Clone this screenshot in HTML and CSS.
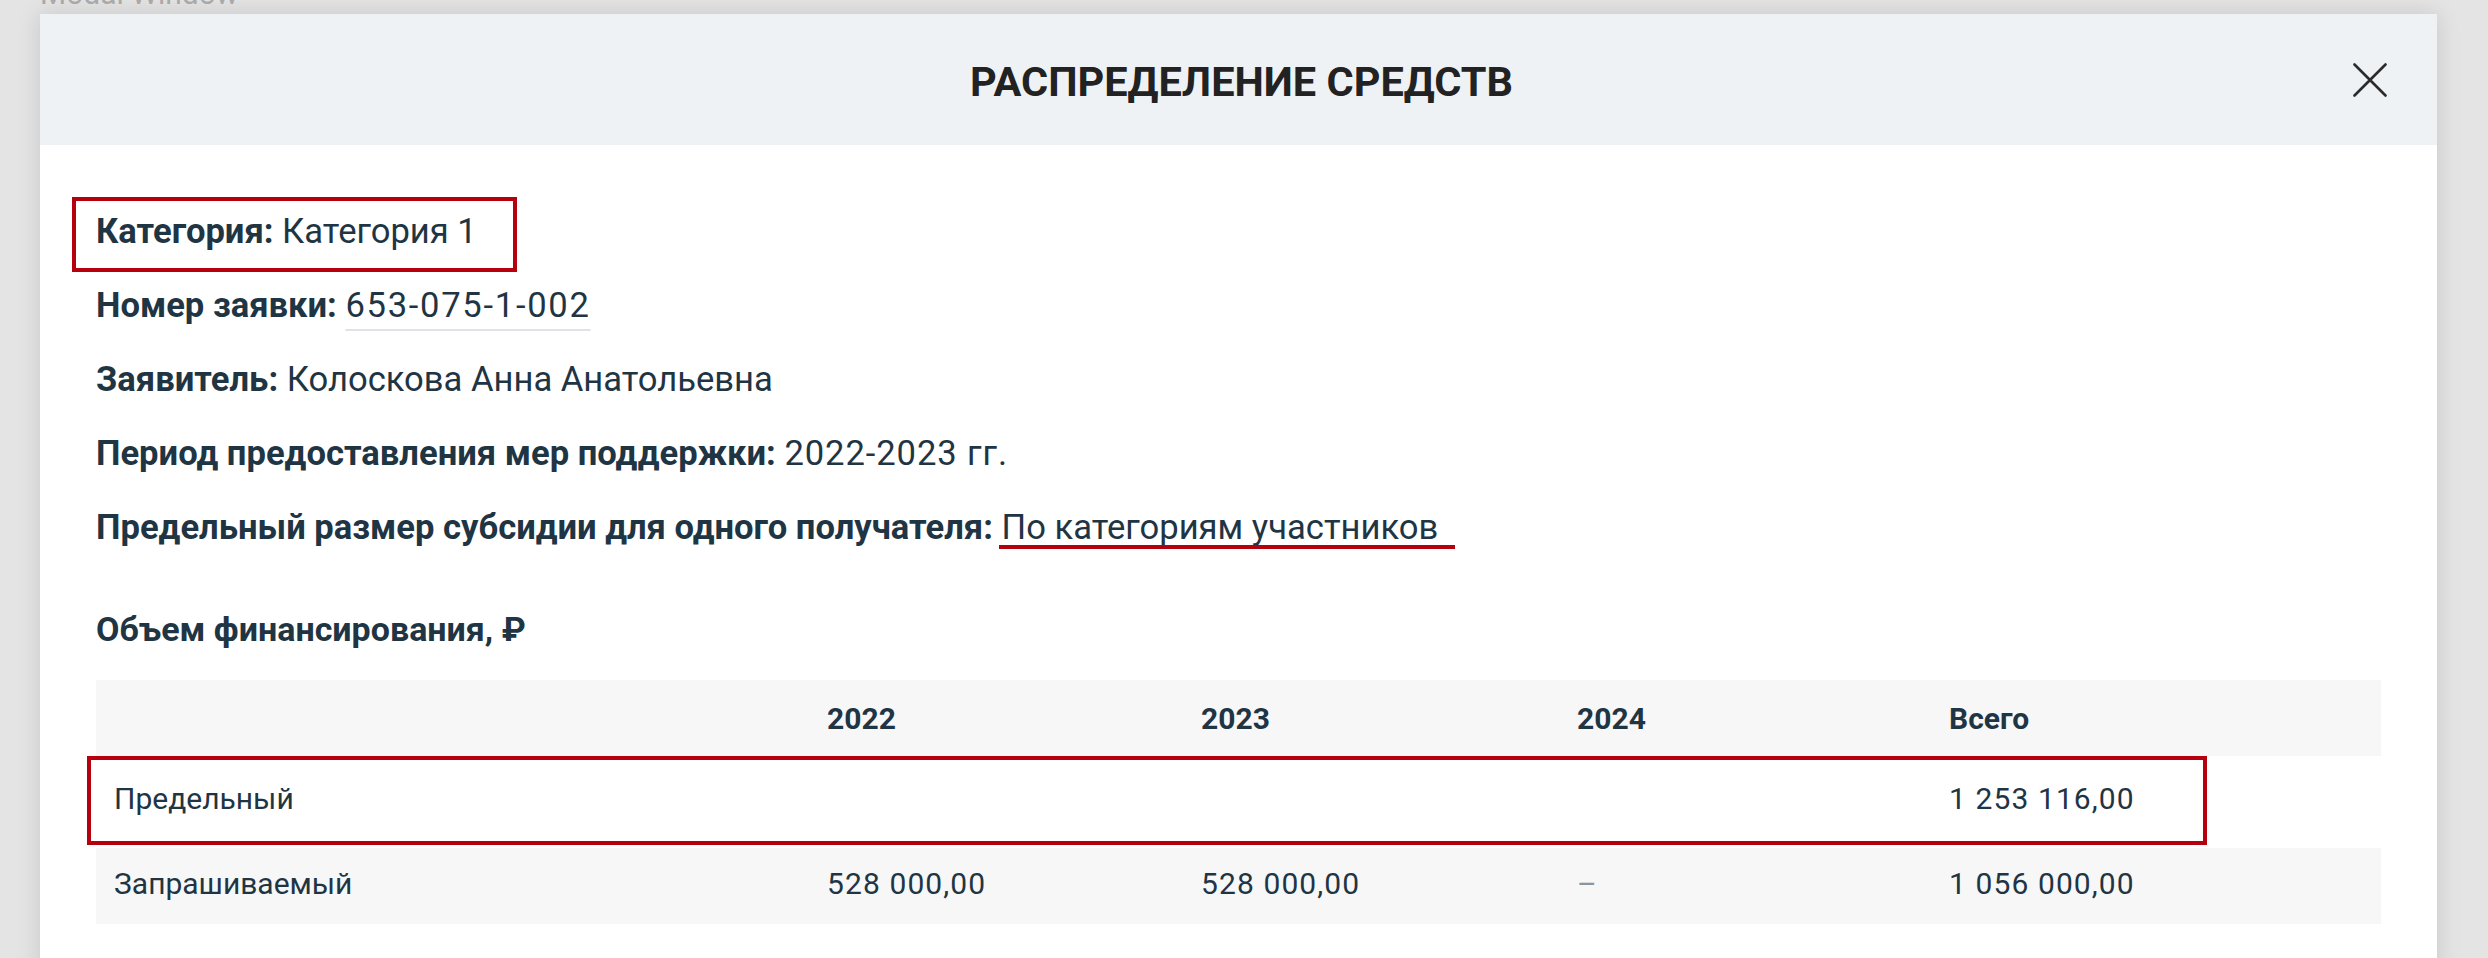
FILE: index.html
```html
<!DOCTYPE html>
<html lang="ru">
<head>
<meta charset="utf-8">
<title>Modal Window</title>
<link rel="stylesheet" href="styles.css">
</head>
<body>
<div class="page-label">Modal Window</div>
<div class="modal">
  <div class="modal-header">
    <span></span>
    <h1 class="modal-title">РАСПРЕДЕЛЕНИЕ СРЕДСТВ</h1>
    <button class="close" aria-label="Закрыть">
      <svg width="34" height="34" viewBox="0 0 34 34"><path d="M1.5 1.5 L32.5 32.5 M32.5 1.5 L1.5 32.5" stroke="#2b2b2b" stroke-width="2.6" fill="none" stroke-linecap="round"/></svg>
    </button>
  </div>
  <div class="modal-body">
    <div class="info">
      <p class="info-row"><span class="mark-box"><b>Категория:</b> Категория 1</span></p>
      <p class="info-row"><b>Номер заявки:</b> <span class="link">653-075-1-002</span></p>
      <p class="info-row"><b>Заявитель:</b> Колоскова Анна Анатольевна</p>
      <p class="info-row"><b>Период предоставления мер поддержки:</b> <span class="digits">2022-2023 гг.</span></p>
      <p class="info-row"><b>Предельный размер субсидии для одного получателя:</b> <span class="mark-line">По категориям участников</span></p>
    </div>
    <h2 class="section-title">Объем финансирования, ₽</h2>
    <div class="fin-table">
      <div class="tr th">
        <div class="td"></div>
        <div class="td">2022</div>
        <div class="td">2023</div>
        <div class="td">2024</div>
        <div class="td">Всего</div>
      </div>
      <div class="tr tr-limit">
        <div class="td">Предельный</div>
        <div class="td"></div>
        <div class="td"></div>
        <div class="td"></div>
        <div class="td num">1 253 116,00</div>
      </div>
      <div class="tr tr-alt">
        <div class="td">Запрашиваемый</div>
        <div class="td num">528 000,00</div>
        <div class="td num">528 000,00</div>
        <div class="td muted">–</div>
        <div class="td num">1 056 000,00</div>
      </div>
    </div>
  </div>
</div>
</body>
</html>
```
FILE: styles.css
```css
* { box-sizing: border-box; }
html, body { margin: 0; padding: 0; }
body {
  background: #e4e4e4;
  font-family: Roboto, "Noto Sans", sans-serif;
  color: #1f3544;
  width: 2488px;
  height: 958px;
  overflow: hidden;
}
.page-label {
  margin: -21px 0 0 40px;
  height: 30px;
  line-height: 30px;
  font-size: 30px;
  color: #a9a9a9;
}
.modal {
  margin: 5px 0 0 40px;
  width: 2397px;
  height: 960px;
  background: #fff;
  box-shadow: 0 0 22px rgba(0, 0, 0, 0.13);
}
.modal-header {
  height: 131px;
  background: #eef2f5;
  display: grid;
  grid-template-columns: 1fr auto 1fr;
  align-items: center;
  padding: 0 50px 0 56px;
}
.modal-title {
  margin: 0;
  font-size: 41.5px;
  font-weight: 700;
  color: #222;
  line-height: 48px;
  padding-top: 4px;
}
.close {
  justify-self: end;
  border: 0;
  background: none;
  padding: 0;
  width: 34px;
  height: 34px;
  display: flex;
}
.modal-body {
  padding: 62px 56px 0 56px;
}
.info {
  display: flex;
  flex-direction: column;
  gap: 26px;
}
.info-row {
  margin: 0;
  font-size: 34.6px;
  line-height: 48px;
}
.info-row b { font-weight: 700; }
.mark-box { position: relative; display: inline-block; }
.mark-box::after {
  content: "";
  position: absolute;
  left: -24px;
  right: -40px;
  top: -10px;
  bottom: -17px;
  border: 4px solid #b5000e;
}
.link {
  letter-spacing: 1.7px;
  text-decoration: underline;
  text-decoration-color: #dfe3e7;
  text-decoration-thickness: 2px;
  text-underline-offset: 12px;
}
.digits { letter-spacing: 0.9px; }
.mark-line { position: relative; display: inline-block; }
.mark-line::after {
  content: "";
  position: absolute;
  left: -3px;
  right: -17px;
  bottom: 2px;
  height: 4px;
  background: #b5000e;
}
.section-title {
  margin: 54px 0 0 0;
  font-size: 34px;
  font-weight: 700;
  line-height: 48px;
}
.fin-table {
  margin-top: 27px;
  font-size: 30px;
}
.tr {
  display: grid;
  grid-template-columns: 713px 374px 376px 372px 1fr;
  align-items: center;
}
.td { padding-left: 18px; }
.num { letter-spacing: 1.1px; }
.th { height: 76px; background: #f7f7f7; font-weight: 700; }
.tr-limit { height: 92px; position: relative; padding-bottom: 8px; }
.tr-limit::after {
  content: "";
  position: absolute;
  left: -9px;
  right: 174px;
  top: 0;
  bottom: 3px;
  border: 4px solid #b5000e;
}
.tr-alt { height: 76px; background: #f7f7f7; padding-bottom: 6px; }
.muted { color: #8a96a0; }
```
